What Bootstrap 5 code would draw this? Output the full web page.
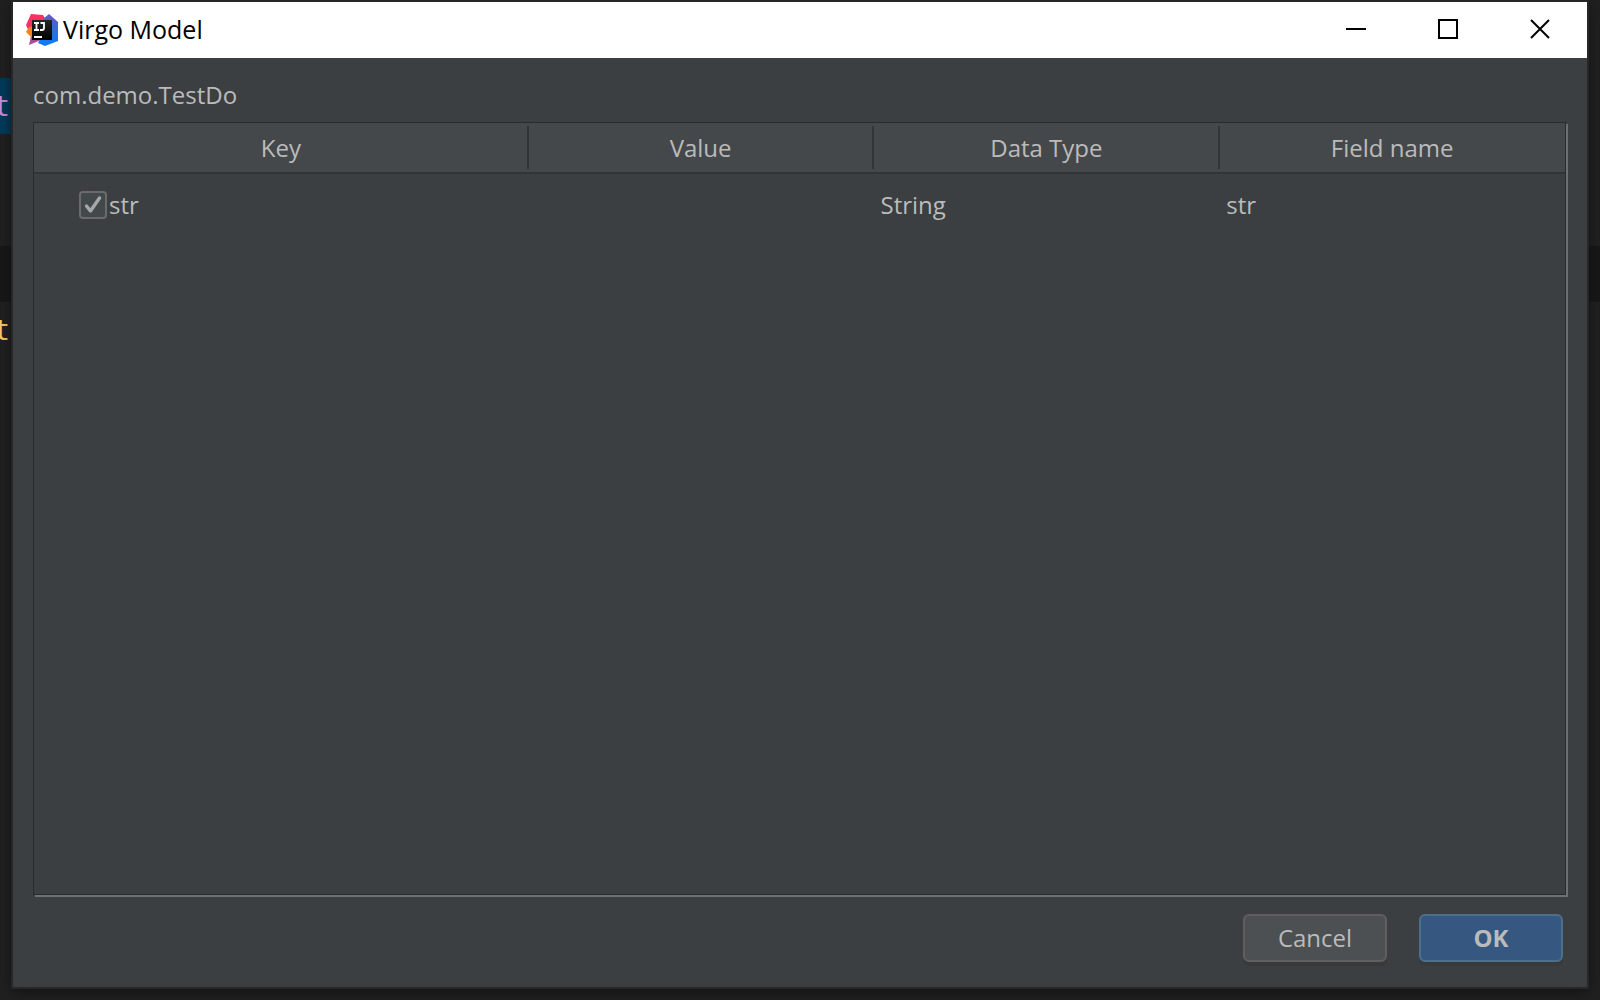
<!DOCTYPE html>
<html lang="en">
<head>
<meta charset="utf-8">
<meta name="viewport" content="width=device-width, initial-scale=1">
<title>Virgo Model</title>
<link href="https://cdn.jsdelivr.net/npm/bootstrap@5.3.0/dist/css/bootstrap.min.css" rel="stylesheet">
<style>
  body { background: #202020; color: #bbb; font-family: "Open Sans", "Noto Sans", sans-serif; font-size: 24px; line-height: 32px; }
  /* editor behind the dialog */
  .editor { padding-top: 78px; font-family: "DejaVu Sans Mono", monospace; font-size: 28px; line-height: 58px; }
  .code-line { height: 56px; }
  .code-line span { width: 10px; overflow: hidden; }
  .code-selected { background: linear-gradient(90deg, #023a5a 12px, #202020 12px); color: #c78bdc; }
  .code-caret { background: #171717; }
  .code-method { color: #ffc66d; }
  /* dialog window */
  .window { margin: 2px 13px 13px; background: #3c3f41; box-shadow: 0 0 0 2px #262728, 0 4px 12px #111; z-index: 1; }
  .title-bar { height: 56px; background: #fff; color: #000; padding-left: 13px; }
  .title-bar h1 { margin: 0 auto 0 5px; padding-bottom: 2px; font-size: 25px; line-height: 32px; }
  .win-btn { width: 92px; height: 54px; padding: 0 2px 0 0; border: 0; background: transparent; color: #000; }
  .client { padding: 21px 21px 25px 20px; }
  .frame { margin-top: 11px; border: 1px solid #292b2d; box-shadow: 2px 2px 0 #6d7072; }
  .grid { table-layout: fixed; width: 100%; }
  .grid th { position: relative; height: 50px; padding: 0; font-weight: 400; text-align: center; background: #45484a; border-bottom: 2px solid #323537; }
  .grid th + th::before { content: ""; position: absolute; left: -1px; top: 3px; bottom: 3px; width: 2px; background: #323537; }
  .grid td { height: 62px; padding: 0 7px; }
  .grid .key-cell { padding-left: 45px; }
  .key-col { width: 32.25%; }
  .tick.form-check-input { width: 28px; height: 28px; margin: 0 2px 0 0; border: 2px solid #6b6b6b; border-radius: 4px; background-color: #43494a; }
  .tick.form-check-input:checked { background-color: #43494a; border-color: #6b6b6b; background-size: 100% 100%; background-image: url("data:image/svg+xml,%3Csvg xmlns='http://www.w3.org/2000/svg' viewBox='0 0 24 24'%3E%3Cpath d='M5.500 13l4 5L18.500 5' fill='none' stroke='%23a7a7a7' stroke-width='3.400' stroke-linecap='round' stroke-linejoin='round'/%3E%3C/svg%3E"); }
  .actions { margin-top: 19px; padding-right: 3px; gap: 32px; }
  .dlg-btn { width: 144px; height: 48px; padding: 0; border: 2px solid #5e6060; border-radius: 6px; background: #4c5052; color: #bbb; font-size: 24px; line-height: 32px; box-shadow: 0 4px 0 #37393b; }
  .dlg-ok { background: #365880; border-color: #4c708c; font-weight: 700; }
</style>
<script src="https://cdn.jsdelivr.net/npm/bootstrap@5.3.0/dist/js/bootstrap.bundle.min.js"></script>
</head>
<body class="position-relative vh-100 d-flex overflow-hidden">
  <div class="editor position-absolute top-0 start-0 w-100">
    <div class="code-line code-selected d-flex"><span class="d-flex justify-content-end">t</span></div>
    <div class="code-line"></div>
    <div class="code-line"></div>
    <div class="code-line code-caret"></div>
    <div class="code-line code-method d-flex"><span class="d-flex justify-content-end">t</span></div>
  </div>

  <main class="window position-relative flex-grow-1 d-flex flex-column">
    <header class="title-bar d-flex align-items-start">
      <svg class="align-self-center" width="32" height="32" viewBox="0 0 32 32" aria-hidden="true">
        <defs>
          <linearGradient id="pink" x1="0" y1="0" x2="0" y2="1"><stop offset="0" stop-color="#fe315d"/><stop offset=".5" stop-color="#f4306d"/><stop offset="1" stop-color="#9b52a6"/></linearGradient>
          <linearGradient id="blue" x1="0" y1="0" x2="0" y2="1"><stop offset="0" stop-color="#6b57c6"/><stop offset=".4" stop-color="#3b6bd0"/><stop offset="1" stop-color="#087cfa"/></linearGradient>
          <linearGradient id="ink" x1="0" y1="0" x2="0" y2="1"><stop offset="0" stop-color="#262626"/><stop offset="1" stop-color="#000"/></linearGradient>
        </defs>
        <path d="M5 0 17 1 20 6 20 24 3 31 5 22 0 11Z" fill="url(#pink)"/>
        <path d="M3 13 0 18 5 23 12 20 8 12Z" fill="#f58220"/>
        <path d="M17 5 23 0 32 8V27L19 32 12 29 17 20Z" fill="url(#blue)"/>
        <path d="M6 6H26V26H6Z" fill="url(#ink)"/>
        <path d="M8 9H13M10.500 9V16M8 16H13M14.500 9H18V14Q18 16 16 16H14M8 23H16" fill="none" stroke="#fff" stroke-width="1.800"/>
      </svg>
      <h1 class="align-self-center fw-normal">Virgo Model</h1>
      <button class="win-btn" type="button" aria-label="Minimize"><svg class="d-block mx-auto" width="20" height="20"><path d="M0 10H20" stroke="#000" stroke-width="2"/></svg></button>
      <button class="win-btn" type="button" aria-label="Maximize"><svg class="d-block mx-auto" width="20" height="20"><path d="M1 1H19V19H1Z" fill="none" stroke="#000" stroke-width="2"/></svg></button>
      <button class="win-btn" type="button" aria-label="Close"><svg class="d-block mx-auto" width="20" height="20"><path d="M1 1 19 19M19 1 1 19" stroke="#000" stroke-width="2"/></svg></button>
    </header>

    <section class="client flex-grow-1 d-flex flex-column">
      <div>com.demo.TestDo</div>
      <div class="frame flex-grow-1">
        <table class="grid">
          <colgroup><col class="key-col"><col><col><col></colgroup>
          <thead><tr><th scope="col">Key</th><th scope="col">Value</th><th scope="col">Data Type</th><th scope="col">Field name</th></tr></thead>
          <tbody><tr>
            <td class="key-cell"><div class="d-flex align-items-center"><input class="tick form-check-input" type="checkbox" id="key-str" checked><label for="key-str">str</label></div></td>
            <td></td><td>String</td><td>str</td>
          </tr></tbody>
        </table>
      </div>
      <div class="actions d-flex justify-content-end">
        <button class="btn dlg-btn" type="button">Cancel</button>
        <button class="btn dlg-btn dlg-ok" type="button">OK</button>
      </div>
    </section>
  </main>
</body>
</html>
